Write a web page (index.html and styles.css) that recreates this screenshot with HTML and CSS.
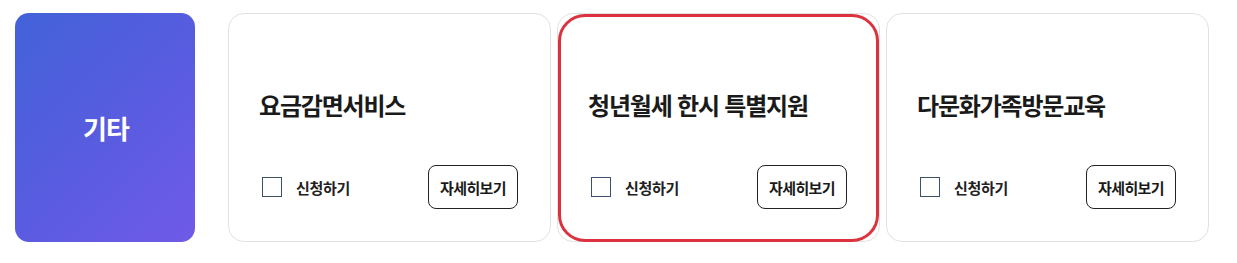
FILE: index.html
```html
<!DOCTYPE html>
<html lang="ko">
<head>
<meta charset="utf-8">
<link rel="stylesheet" href="styles.css">
</head>
<body>
<div class="row">
  <div class="category"><span>기타</span></div>
  <div class="cards">
    <div class="card">
      <h3 class="title">요금감면서비스</h3>
      <div class="foot">
        <label class="apply"><span class="box"></span><span class="apply-text">신청하기</span></label>
        <button class="more">자세히보기</button>
      </div>
    </div>
    <div class="card selected">
      <h3 class="title">청년월세 한시 특별지원</h3>
      <div class="foot">
        <label class="apply"><span class="box"></span><span class="apply-text">신청하기</span></label>
        <button class="more">자세히보기</button>
      </div>
    </div>
    <div class="card">
      <h3 class="title">다문화가족방문교육</h3>
      <div class="foot">
        <label class="apply"><span class="box"></span><span class="apply-text">신청하기</span></label>
        <button class="more">자세히보기</button>
      </div>
    </div>
  </div>
</div>
</body>
</html>
```
FILE: styles.css
```css
* { box-sizing: border-box; }
html, body { margin: 0; padding: 0; background: #fff; }
body {
  font-family: "Noto Sans CJK KR", "Noto Sans", sans-serif;
  color: #1a1a1a;
}
.row {
  display: flex;
  padding: 13px 15px 0 15px;
  gap: 33px;
}
.category {
  width: 180px;
  height: 229px;
  border-radius: 14px;
  background: linear-gradient(135deg, #4262d8 0%, #5a5ce0 55%, #705ae8 100%);
  display: flex;
  align-items: center;
  justify-content: center;
  flex-shrink: 0;
}
.category span {
  color: #fff;
  font-size: 26px;
  font-weight: 700;
  letter-spacing: -1px;
  margin-left: 2px;
}
.cards {
  display: flex;
  gap: 6px;
}
.card {
  position: relative;
  width: 323px;
  height: 229px;
  border: 1px solid #e2e2e2;
  border-radius: 16px;
  background: #fff;
  display: flex;
  flex-direction: column;
  padding: 76px 32px 32px 30px;
}
.card.selected::after {
  content: "";
  position: absolute;
  inset: 0 0 -1px 0;
  border: 3px solid #dc3240;
  border-radius: 27px;
  pointer-events: none;
}
.title {
  margin: 0;
  font-size: 24px;
  line-height: 30px;
  font-weight: 700;
  letter-spacing: -1.2px;
  color: #1a1a1a;
}
.foot {
  margin-top: auto;
  display: flex;
  align-items: center;
  justify-content: space-between;
}
.apply {
  display: flex;
  align-items: center;
  gap: 14px;
  padding-left: 3px;
}
.box {
  width: 20px;
  height: 20px;
  border: 1.5px solid #3e4f6b;
  background: #fff;
}
.apply-text {
  font-size: 15px;
  font-weight: 700;
  color: #222;
  letter-spacing: -0.3px;
}
.more {
  width: 90px;
  height: 44px;
  border: 1px solid #222;
  border-radius: 8px;
  background: #fff;
  font-family: "Noto Sans CJK KR", "Noto Sans", sans-serif;
  font-size: 15px;
  font-weight: 700;
  color: #1a1a1a;
  letter-spacing: -0.6px;
  padding: 0;
}
```
